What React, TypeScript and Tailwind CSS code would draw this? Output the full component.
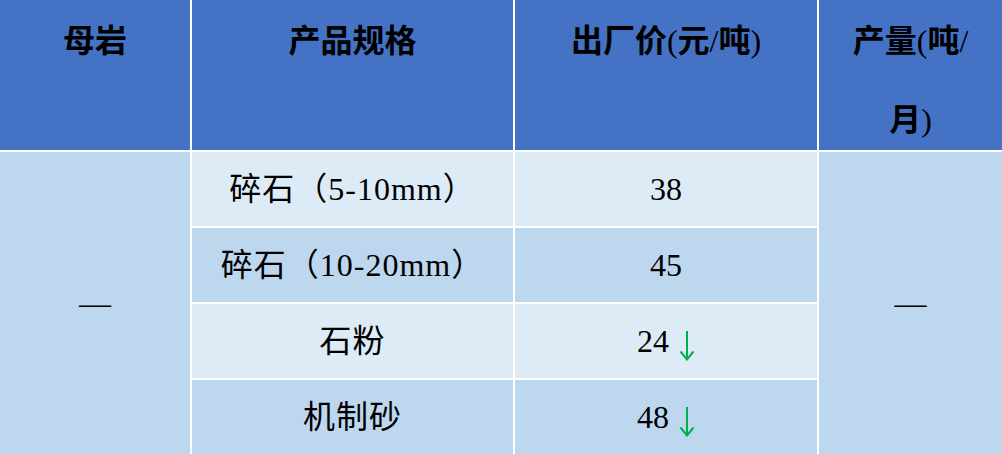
import React from "react"

const head = "font-['Noto_Sans_CJK_SC',sans-serif] font-bold text-[32px] leading-[76px] text-black text-center bg-[#4472C4]"
const cell = "flex items-center justify-center font-['Liberation_Serif','Noto_Sans_CJK_SC',serif] text-[32px] text-black"

function Latin({ children }: { children: React.ReactNode }) {
  return <span className="font-['Liberation_Serif',serif] font-normal">{children}</span>
}

function DownArrow() {
  return (
    <svg width="16" height="31" viewBox="0 0 16 31" className="ml-[10px] mt-[8px]">
      <line x1="8" y1="1" x2="8" y2="29" stroke="#00B050" strokeWidth="2" />
      <polyline points="1.5,21.5 8,29.5 14.5,21.5" fill="none" stroke="#00B050" strokeWidth="2" />
    </svg>
  )
}

const rows = [
  { spec: "碎石（5-10mm）", price: "38", down: false, light: true },
  { spec: "碎石（10-20mm）", price: "45", down: false, light: false },
  { spec: "石粉", price: "24", down: true, light: true },
  { spec: "机制砂", price: "48", down: true, light: false },
]

export default function App() {
  return (
    <div className="w-[1002px] h-[454px] overflow-hidden bg-white">
      <div className="grid grid-cols-[190px_321px_302px_183px] grid-rows-[150px_74px_74px_74px_74px] gap-[2px] bg-white">
        <div className={head}>母岩</div>
        <div className={head}>产品规格</div>
        <div className={head}>
          出厂价<Latin>(</Latin>元<Latin>/</Latin>吨<Latin>)</Latin>
        </div>
        <div className={head}>
          产量<Latin>(</Latin>吨<Latin>/</Latin>
          <br />
          月<Latin>)</Latin>
        </div>

        <div className={`${cell} row-span-4 col-start-1 row-start-2 bg-[#BDD7EE]`}>—</div>

        {rows.map((r, i) => (
          <React.Fragment key={i}>
            <div className={`${cell} col-start-2 tracking-[1px] ${r.light ? "bg-[#DDEBF7]" : "bg-[#BDD7EE]"}`}>
              {r.spec}
            </div>
            <div className={`${cell} col-start-3 ${r.light ? "bg-[#DDEBF7]" : "bg-[#BDD7EE]"}`}>
              <span>{r.price}</span>
              {r.down && <DownArrow />}
            </div>
          </React.Fragment>
        ))}

        <div className={`${cell} row-span-4 col-start-4 row-start-2 bg-[#BDD7EE]`}>—</div>
      </div>
    </div>
  )
}
